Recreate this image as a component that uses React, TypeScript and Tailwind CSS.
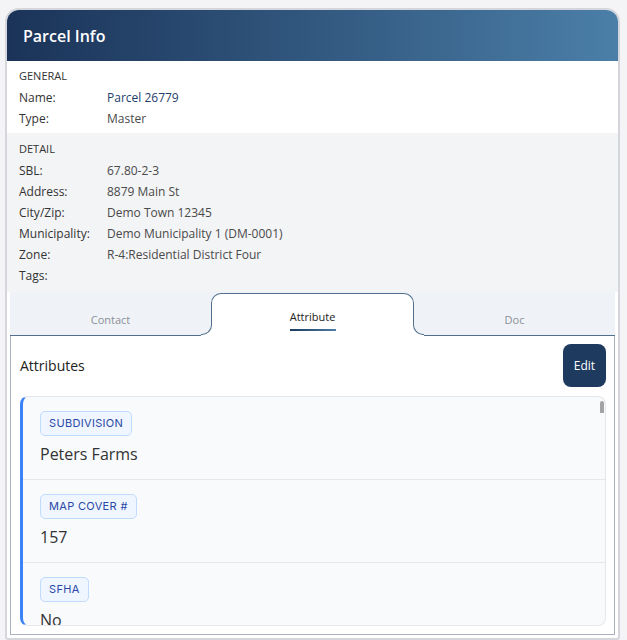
import React from 'react';

const font = { fontFamily: '"Open Sans", "Noto Sans", sans-serif' };

const general = [
  { label: 'Name:', value: 'Parcel 26779', link: true },
  { label: 'Type:', value: 'Master' },
];

const detail = [
  { label: 'SBL:', value: '67.80-2-3' },
  { label: 'Address:', value: '8879 Main St' },
  { label: 'City/Zip:', value: 'Demo Town 12345' },
  { label: 'Municipality:', value: 'Demo Municipality 1 (DM-0001)' },
  { label: 'Zone:', value: 'R-4:Residential District Four' },
  { label: 'Tags:', value: '' },
];

const attributes = [
  { key: 'SUBDIVISION', value: 'Peters Farms' },
  { key: 'MAP COVER #', value: '157' },
  { key: 'SFHA', value: 'No' },
];

const Row: React.FC<{ label: string; value: string; link?: boolean }> = ({ label, value, link }) => (
  <div className="flex h-[21px] items-center text-[12px]">
    <span className="w-[88px] text-[#333]">{label}</span>
    <span className={link ? 'text-[#23406a]' : 'text-[#4a4a4a]'}>{value}</span>
  </div>
);

export default function App() {
  return (
    <div className="h-[640px] overflow-hidden bg-[#f4f4f6] pl-[5px] pt-[8px]" style={font}>
      <div className="flex w-[615px] flex-col overflow-hidden rounded-t-[14px] rounded-b-[3px] border-2 border-[#d5d6dc] bg-white">
        {/* header */}
        <div className="flex h-[51px] items-center bg-linear-to-r from-[#1b3358] to-[#4b7fa8] pl-[16px]">
          <h1 className="text-[16px] font-semibold text-white">Parcel Info</h1>
        </div>

        {/* general */}
        <div className="bg-white px-[12px] pt-[5px] pb-[4px]">
          <div className="flex h-[21px] items-center text-[11px] text-[#333]">GENERAL</div>
          {general.map((r) => (
            <Row key={r.label} {...r} />
          ))}
        </div>

        {/* detail */}
        <div className="bg-[#f3f4f6] px-[12px] pt-[6px] pb-[6px]">
          <div className="flex h-[21px] items-center text-[11px] text-[#333]">DETAIL</div>
          {detail.map((r) => (
            <Row key={r.label} {...r} />
          ))}
        </div>

        {/* tabs */}
        <div className="mx-[3px] mb-[3px] bg-[#f3f4f6]">
          <div className="flex h-[44px] border-b border-[#52708d] bg-[#eff2f7]">
            <div className="flex flex-1 items-end justify-center pb-[7px] text-[11px] text-[#8b9098]">Contact</div>
            <div className="relative z-10 mt-px -mb-px flex flex-1 flex-col items-center justify-end rounded-t-[10px] border-x border-t border-[#52708d] bg-white pb-[5px]">
              <span className="text-[11px] text-[#222]">Attribute</span>
              <span className="mt-[4px] h-[2px] w-[46px] bg-linear-to-r from-[#1e3a5f] to-[#4b7fa8]" />
              <span className="absolute bottom-0 left-[-11px] h-[11px] w-[11px] bg-white" />
              <span className="absolute bottom-px left-[-11px] h-[11px] w-[11px] rounded-br-[10px] border-r border-b border-[#52708d] bg-[#eff2f7]" />
              <span className="absolute right-[-11px] bottom-0 h-[11px] w-[11px] bg-white" />
              <span className="absolute right-[-11px] bottom-px h-[11px] w-[11px] rounded-bl-[10px] border-b border-l border-[#52708d] bg-[#eff2f7]" />
            </div>
            <div className="flex flex-1 items-end justify-center pb-[7px] text-[11px] text-[#8b9098]">Doc</div>
          </div>

          {/* panel */}
          <div className="border-x border-b border-[#aab2bd] bg-white pt-[8px] pr-[8px] pb-[8px] pl-[9px]">
            <div className="flex h-[43px] items-center justify-between">
              <h2 className="text-[14px] text-[#222]">Attributes</h2>
              <button className="flex h-[43px] w-[43px] items-center justify-center rounded-[8px] bg-[#1e3a5f] text-[12px] text-white">
                Edit
              </button>
            </div>
            <div className="relative mt-[9px] h-[230px] overflow-hidden rounded-lg border border-l-[3px] border-[#e5e7eb] border-l-[#3b82f6] bg-[#f8fafc]">
              {attributes.map((a, i) => (
                <div
                  key={a.key}
                  className={`flex flex-col items-start gap-[6px] pt-[14px] pb-[13px] pl-[17px] ${i > 0 ? 'border-t border-[#e5e7eb]' : ''}`}
                >
                  <span
                    className="inline-flex h-[25px] items-center rounded-[5px] border border-[#bfdbfe] bg-[#eff6ff] px-[8px] text-[11px] tracking-[0.03em] text-[#2a48a6]"
                    style={{ fontFamily: 'Inter, "Noto Sans", sans-serif' }}
                  >
                    {a.key}
                  </span>
                  <span className="text-[16px] leading-[24px] text-[#333]">{a.value}</span>
                </div>
              ))}
              <span className="absolute top-[4px] right-px h-[12px] w-[4px] rounded-t-sm bg-[#a3a3a3]" />
            </div>
          </div>
        </div>
      </div>
    </div>
  );
}
